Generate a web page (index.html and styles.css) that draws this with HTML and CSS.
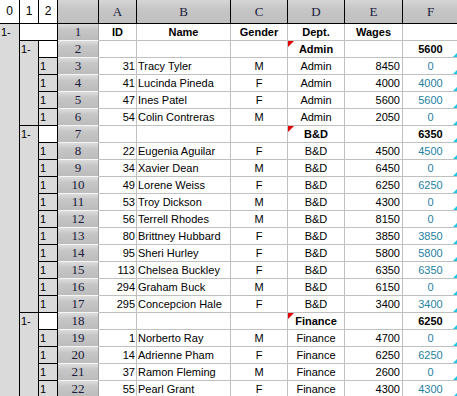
FILE: index.html
```html
<!DOCTYPE html>
<html lang="en">
<head>
  <meta charset="UTF-8" />
  <title>Grouped Sheet</title>
  <link rel="stylesheet" href="styles.css">
</head>
<body>
  <div class="sheet" id="sheet"></div>

  <script>
    const sheet = document.getElementById("sheet");

    const groups = [
      { dept: "Admin", total: 5600, items: [
        [31, "Tracy Tyler", "M", 8450, 0],
        [41, "Lucinda Pineda", "F", 4000, 4000],
        [47, "Ines Patel", "F", 5600, 5600],
        [54, "Colin Contreras", "M", 2050, 0]
      ]},
      { dept: "B&D", total: 6350, items: [
        [22, "Eugenia Aguilar", "F", 4500, 4500],
        [34, "Xavier Dean", "M", 6450, 0],
        [49, "Lorene Weiss", "F", 6250, 6250],
        [53, "Troy Dickson", "M", 4300, 0],
        [56, "Terrell Rhodes", "M", 8150, 0],
        [80, "Brittney Hubbard", "F", 3850, 3850],
        [95, "Sheri Hurley", "F", 5800, 5800],
        [113, "Chelsea Buckley", "F", 6350, 6350],
        [294, "Graham Buck", "M", 6150, 0],
        [295, "Concepcion Hale", "F", 3400, 3400]
      ]},
      { dept: "Finance", total: 6250, items: [
        [1, "Norberto Ray", "M", 4700, 0],
        [14, "Adrienne Pham", "F", 6250, 6250],
        [37, "Ramon Fleming", "M", 2600, 0],
        [55, "Pearl Grant", "F", 4300, 4300]
      ]}
    ];

    function cell(cls, text, span) {
      const el = document.createElement("div");
      el.className = cls;
      if (text !== undefined && text !== "") el.textContent = text;
      if (span) el.style.gridRow = "span " + span;
      sheet.appendChild(el);
      return el;
    }

    // header row
    ["0", "1", "2"].forEach(t => cell("ol-hd", t));
    cell("hd");
    ["A", "B", "C", "D", "E", "F"].forEach(t => cell("hd", t));

    const totalRows = 1 + groups.reduce((n, g) => n + 1 + g.items.length, 0);
    let row = 1;

    // row 1: column titles
    cell("ol", "1-", totalRows);
    cell("ol-w span2");
    cell("rh", row++);
    cell("c center bold", "ID");
    cell("c center bold", "Name");
    cell("c center bold", "Gender");
    cell("c center bold", "Dept.");
    cell("c center bold", "Wages");
    cell("c");

    groups.forEach(g => {
      cell("ol", "1-", g.items.length + 1);
      cell("ol-w");
      cell("rh", row++);
      cell("c");
      cell("c");
      cell("c");
      cell("c center bold note", g.dept);
      cell("c");
      cell("c center bold mark", g.total);

      g.items.forEach(([id, name, gender, wages, f]) => {
        cell("ol-item", "1");
        cell("rh", row++);
        cell("c right", id);
        cell("c name", name);
        cell("c center", gender);
        cell("c center", g.dept);
        cell("c right wage", wages);
        cell("c center calc mark", f);
      });
    });
  </script>
</body>
</html>
```

FILE: styles.css
```css
body {
  margin: 0;
  overflow: hidden;
  background: #fff;
  font-family: "Liberation Sans", Arial, sans-serif;
  font-size: 11px;
  color: #000;
}
.sheet {
  display: grid;
  grid-template-columns: 20px 19px 19px 41px 38px 94px 57px 57px 58px 56px;
  grid-template-rows: 24px;
  grid-auto-rows: 17px;
}
.sheet > div {
  box-sizing: border-box;
  white-space: nowrap;
  overflow: hidden;
  line-height: 16px;
}
.ol-hd {
  background: #fff;
  border-right: 1px solid #000;
  border-bottom: 1px solid #000;
  text-align: center;
  font-size: 12px;
  line-height: 23px !important;
}
.hd {
  background: linear-gradient(#d6d6d6, #c6c6c6 40%, #bfbfbf);
  border-right: 1px solid #000;
  border-bottom: 1px solid #000;
  text-align: center;
  font-family: "Liberation Serif", "Times New Roman", serif;
  font-size: 13px;
  line-height: 23px !important;
  color: #1a1a3a;
}
.ol {
  background: #dadada;
  border-right: 1px solid #000;
  border-bottom: 1px solid #000;
  padding-left: 1px;
}
.ol-w {
  background: #fff;
  border-right: 1px solid #000;
  border-bottom: 1px solid #000;
}
.span2 {
  grid-column: span 2;
}
.ol-item {
  background: #dadada;
  border-right: 1px solid #000;
  border-bottom: 1px solid #000;
  padding-left: 1px;
}
.rh {
  background: linear-gradient(#dcdcdc, #c6c6c6 35%, #bcbcbc);
  border-right: 1px solid #a0a0a0;
  border-bottom: 1px solid #f6f6f6;
  text-align: center;
  font-family: "Liberation Serif", "Times New Roman", serif;
  font-size: 13px;
  color: #1a1a3a;
}
.c {
  position: relative;
  background: #fff;
  border-right: 1px solid #c0c0c0;
  border-bottom: 1px solid #c0c0c0;
}
.center {
  text-align: center;
}
.right {
  text-align: right;
  padding-right: 1px;
}
.wage {
  padding-right: 2px;
}
.name {
  padding-left: 1px;
}
.bold {
  font-weight: bold;
}
.calc {
  color: #1f7f9f;
}
.note::before {
  content: "";
  position: absolute;
  top: 0;
  left: 0;
  border-top: 6px solid #e00000;
  border-right: 6px solid transparent;
}
.mark::after {
  content: "";
  position: absolute;
  right: 0;
  bottom: 0;
  border-bottom: 5px solid #1ec8e8;
  border-left: 5px solid transparent;
}
```
